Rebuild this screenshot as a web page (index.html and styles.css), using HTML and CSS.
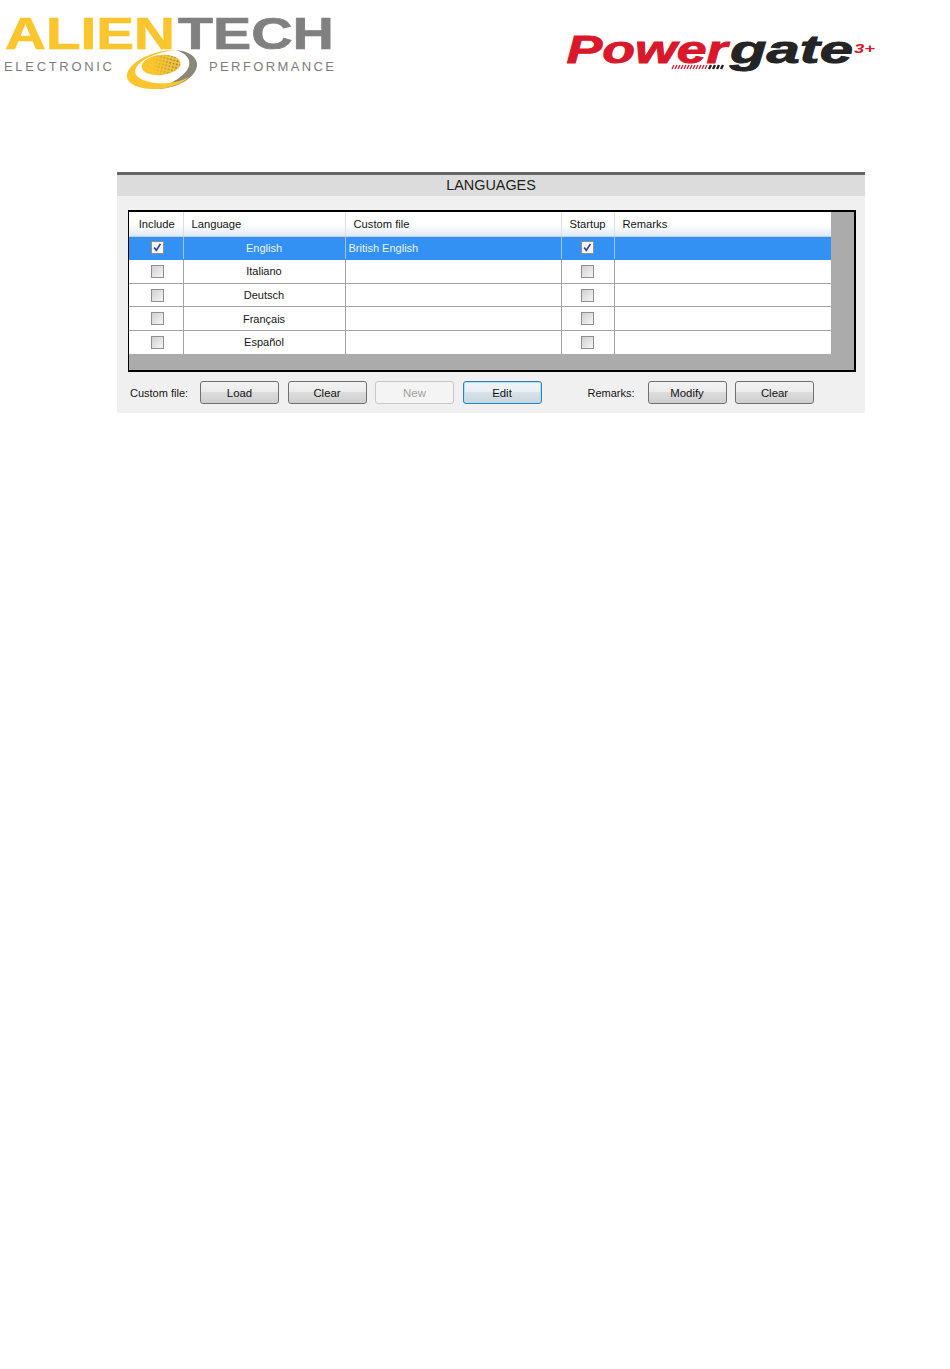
FILE: index.html
```html
<!DOCTYPE html>
<html lang="en">
<head>
<meta charset="utf-8">
<title>Languages</title>
<link rel="stylesheet" href="styles.css">
</head>
<body>
<header class="brand">
  <svg class="logo-alien" viewBox="0 0 340 95" width="340" height="95" aria-label="Alientech Electronic Performance">
    <defs>
      <pattern id="dots" width="3.4" height="3.4" patternUnits="userSpaceOnUse" patternTransform="rotate(20)">
        <circle cx="1.7" cy="1.7" r="1.15" fill="#7d7a6e"/>
      </pattern>
      <linearGradient id="fade" x1="0" x2="1" y1="0" y2="0">
        <stop offset="0.35" stop-color="#fff" stop-opacity="0"/>
        <stop offset="1" stop-color="#fff"/>
      </linearGradient>
      <mask id="fadeMask"><rect x="135" y="50" width="50" height="30" fill="url(#fade)"/></mask>
    </defs>
    <text class="la" x="5" y="48.7" textLength="170" lengthAdjust="spacingAndGlyphs">ALIEN</text>
    <text class="lt" x="178" y="48.7" textLength="156" lengthAdjust="spacingAndGlyphs">TECH</text>
    <text class="ls" x="4" y="71" textLength="108">ELECTRONIC</text>
    <text class="ls" x="209" y="71" textLength="125">PERFORMANCE</text>
    <path d="M176 50C190 51 198 58 197 66C195 78 178 88 158 89C170 84 186 76 189 66C191 58 185 53 176 50Z" fill="#8a8678"/>
    <path d="M175 50C152 50 130 62 127 74C125 84 140 90 158 89C170 88 182 84 189 77C176 84 158 85 146 81C136 78 132 72 138 65C145 57 160 52 175 50Z" fill="#fac52d"/>
    <ellipse cx="161" cy="65" rx="19.5" ry="10" transform="rotate(-6 161 65)" fill="#fac52d"/>
    <ellipse cx="161" cy="65" rx="19.5" ry="10" transform="rotate(-6 161 65)" fill="url(#dots)" mask="url(#fadeMask)"/>
  </svg>
  <svg class="logo-power" viewBox="0 0 320 45" width="320" height="45" aria-label="Powergate 3+">
    <text class="pw" x="0.5" y="29" textLength="161" lengthAdjust="spacingAndGlyphs">Power</text>
    <text class="pg" x="164" y="29" textLength="123" lengthAdjust="spacingAndGlyphs">gate</text>
    <text class="pp" x="288" y="19" textLength="21" lengthAdjust="spacingAndGlyphs">3+</text>
    <path class="ticks-r" d="M108 31l-2 4M111 31l-2 4M114 31l-2 4M117 31l-2 4M120 31l-2 4M123 31l-2 4M126 31l-2 4M129 31l-2 4M132 31l-2 4M135 31l-2 4M138 31l-2 4M141 31l-2 4"/>
    <path class="ticks-k" d="M145 31l-2 4M149 31l-2 4M153 31l-2 4M157 31l-2 4"/>
  </svg>
</header>

<section class="panel">
  <h1 class="panel-title">LANGUAGES</h1>
  <div class="frame">
    <table class="grid">
      <thead>
        <tr>
          <th class="c-inc">Include</th>
          <th class="c-lang">Language</th>
          <th class="c-file">Custom file</th>
          <th class="c-start">Startup</th>
          <th class="c-rem">Remarks</th>
        </tr>
      </thead>
      <tbody>
        <tr class="selected">
          <td class="center cell-box"><span class="check on"><svg viewBox="0 0 13 13" width="11" height="11"><path d="M2.5 6.5l2.6 3.4L10 2.2" fill="none" stroke="#35408f" stroke-width="2"/></svg></span></td>
          <td class="center">English</td>
          <td class="file">British English</td>
          <td class="center"><span class="check on"><svg viewBox="0 0 13 13" width="11" height="11"><path d="M2.5 6.5l2.6 3.4L10 2.2" fill="none" stroke="#35408f" stroke-width="2"/></svg></span></td>
          <td></td>
        </tr>
        <tr>
          <td class="center cell-box"><span class="check"></span></td>
          <td class="center">Italiano</td><td></td>
          <td class="center"><span class="check"></span></td><td></td>
        </tr>
        <tr>
          <td class="center cell-box"><span class="check"></span></td>
          <td class="center">Deutsch</td><td></td>
          <td class="center"><span class="check"></span></td><td></td>
        </tr>
        <tr>
          <td class="center cell-box"><span class="check"></span></td>
          <td class="center">Français</td><td></td>
          <td class="center"><span class="check"></span></td><td></td>
        </tr>
        <tr>
          <td class="center cell-box"><span class="check"></span></td>
          <td class="center">Español</td><td></td>
          <td class="center"><span class="check"></span></td><td></td>
        </tr>
      </tbody>
    </table>
  </div>
  <div class="actions">
    <div class="group">
      <span class="label label-file">Custom file:</span>
      <button class="btn">Load</button>
      <button class="btn">Clear</button>
      <button class="btn disabled">New</button>
      <button class="btn focus">Edit</button>
    </div>
    <div class="group">
      <span class="label label-rem">Remarks:</span>
      <button class="btn">Modify</button>
      <button class="btn">Clear</button>
    </div>
  </div>
</section>
</body>
</html>
```
FILE: styles.css
```css
* { box-sizing: border-box; }
html, body { margin: 0; padding: 0; background: #fff; }
body {
  width: 950px;
  height: 1369px;
  overflow: hidden;
  font-family: "Liberation Sans", Arial, sans-serif;
  color: #151515;
}

.brand {
  display: flex;
  justify-content: space-between;
  align-items: flex-start;
  height: 172px;
  padding-right: 64px;
}
.logo-alien { display: block; }
.logo-power { display: block; margin-top: 34px; overflow: visible; }

.la, .lt { font-size: 45px; font-weight: 700; stroke-width: 0.7; }
.la { fill: #fac52d; stroke: #fac52d; }
.lt { fill: #808080; stroke: #808080; }
.ls { font-size: 13px; fill: #7c7c7c; }
.pw, .pg { font-size: 38px; font-weight: 700; font-style: italic; stroke-width: 0.9; }
.pw { fill: #d9182b; stroke: #d9182b; }
.pg { fill: #242424; stroke: #242424; }
.pp { font-size: 12px; font-weight: 700; font-style: italic; fill: #d9182b; }
.ticks-r, .ticks-k { fill: none; stroke-width: 1.3; }
.ticks-r { stroke: #d9182b; }
.ticks-k { stroke: #242424; stroke-width: 2.4; }

.panel {
  width: 748px;
  height: 241px;
  margin-left: 117px;
  background: #f0f0f0;
  border-top: 3px solid #666;
}
.panel-title {
  margin: 0;
  height: 21px;
  background: #dcdcdc;
  font-size: 14.4px;
  line-height: 21px;
  font-weight: 400;
  text-align: center;
  color: #222;
}

.frame {
  width: 728px;
  height: 162px;
  margin: 14px 0 0 11px;
  background: #ababab;
  border: 2px solid #000;
  border-left-width: 1.5px;
}
.grid {
  width: 702px;
  border-collapse: collapse;
  table-layout: fixed;
  font-size: 11px;
}
.grid th {
  height: 24px;
  padding: 0 0 0 8px;
  font-size: 11.2px;
  font-weight: 400;
  text-align: left;
  background: linear-gradient(#ffffff 0, #ffffff 50%, #f2f6fa 75%, #dfe9f2 100%);
  border-right: 1px solid #d8dde2;
  border-bottom: 1px solid #c4d2df;
}
.grid th.c-inc { padding: 0 0 0 2px; text-align: center; }
.c-inc { width: 54px; }
.c-lang { width: 162px; }
.c-file { width: 216px; }
.c-start { width: 53px; }
.c-rem { width: 217px; }

.grid td {
  height: 23.6px;
  padding: 0;
  background: #fff;
  border-right: 1px solid #a3a3a3;
  border-bottom: 1px solid #a3a3a3;
}
.grid td:last-child, .grid th:last-child { border-right: 0; }
.grid tr:last-child td { border-bottom: 0; }
.grid .center { text-align: center; }
.grid .cell-box { padding-left: 3px; }
.grid .file { padding-left: 3px; }
.grid .selected td {
  background: #3391f3;
  color: #eaf4ff;
  border-bottom-color: #3391f3;
  border-right-color: #9cc6f2;
}

.check {
  display: inline-flex;
  align-items: center;
  justify-content: center;
  width: 13px;
  height: 13px;
  vertical-align: middle;
  margin-top: -1px;
  border: 1px solid #8e8f8f;
  background: linear-gradient(135deg, #d0d0d0, #f6f6f6);
}
.check.on { background: #f4f4f4; }

.actions {
  display: flex;
  justify-content: space-between;
  align-items: center;
  width: 684px;
  margin: 9px 0 0 13px;
}
.group { display: flex; align-items: center; gap: 8.5px; }
.label { font-size: 11px; white-space: nowrap; }
.label-file { width: 61.5px; }
.label-rem { margin-right: 4.5px; }
.btn {
  width: 79px;
  height: 23px;
  padding: 0;
  font: 11.4px "Liberation Sans", Arial, sans-serif;
  color: #151515;
  border: 1px solid #707070;
  border-radius: 3px;
  background: linear-gradient(#f3f3f3 0, #ebebeb 50%, #dcdcdc 50%, #cfcfcf 100%);
}
.btn.disabled {
  color: #a0a0a0;
  border-color: #c8c8c8;
  background: #f4f4f4;
}
.btn.focus {
  border-color: #3c7fb1;
  box-shadow: inset 0 0 0 1px #a8e0f5;
  background: linear-gradient(#f0f5f8 0, #e8eef2 50%, #d8e2e8 50%, #c8d6de 100%);
}
```
